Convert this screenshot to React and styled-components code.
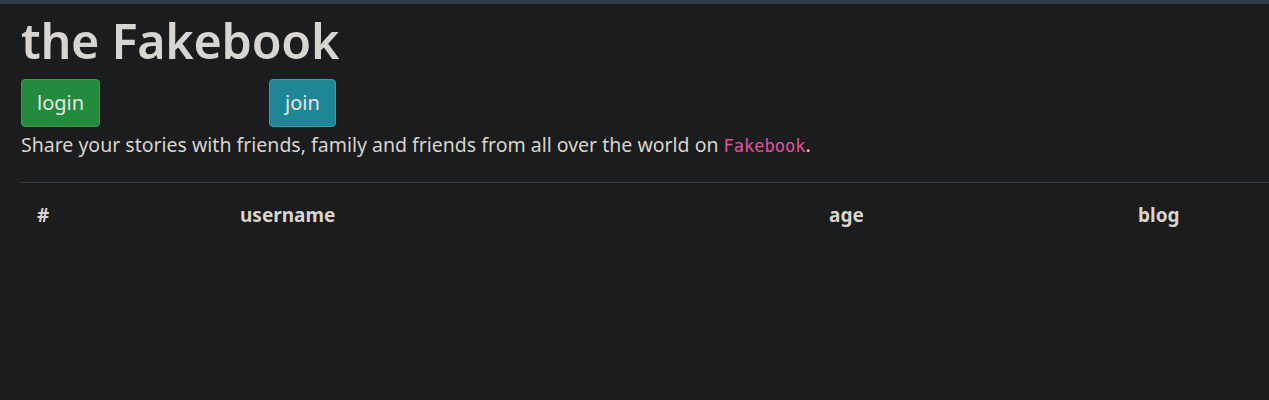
import React from "react";
import styled, { createGlobalStyle } from "styled-components";

const GlobalStyle = createGlobalStyle`
  html, body {
    margin: 0;
    padding: 0;
    background: #1b1c1e;
    color: #d8d4cf;
    font-family: "Noto Sans", "Open Sans", sans-serif;
  }
`;

const TopStrip = styled.div`
  height: 4px;
  background: #2f3d44;
`;

const Page = styled.div`
  padding: 0 0 0 21px;
  overflow: hidden;
`;

const Title = styled.h1`
  margin: 6px 0 9px;
  font-size: 48.5px;
  font-weight: 600;
  line-height: 60px;
  letter-spacing: -0.3px;
  color: #d8d4cf;
`;

const ButtonRow = styled.div`
  display: flex;
  gap: 169px;
`;

const Button = styled.button`
  height: 48px;
  padding: 0 15px;
  border: 1px solid ${(p) => p.$border};
  border-radius: 4px;
  background: ${(p) => p.$bg};
  color: #e8e6e3;
  font-family: inherit;
  font-size: 20px;
  line-height: 1;
`;

const Lead = styled.p`
  margin: 4px 0 0;
  font-size: 19.5px;
  line-height: 28px;
`;

const Code = styled.code`
  font-family: "DejaVu Sans Mono", monospace;
  font-size: 17px;
  color: #e4519a;
`;

const Rule = styled.hr`
  margin: 22px 0 0;
  border: 0;
  border-top: 1px solid #383c3f;
`;

const HeadRow = styled.div`
  display: grid;
  grid-template-columns: 203px 589px 309px 1fr;
  padding: 17px 0;
`;

const Th = styled.div`
  padding: 0 16px;
  font-size: 19px;
  font-weight: 700;
  line-height: 30px;
`;

export default function App() {
  return (
    <>
      <GlobalStyle />
      <TopStrip />
      <Page>
        <Title>the Fakebook</Title>
        <ButtonRow>
          <Button $bg="#228b3d" $border="#2aa24a">login</Button>
          <Button $bg="#1f8696" $border="#2aa0b3">join</Button>
        </ButtonRow>
        <Lead>
          Share your stories with friends, family and friends from all over the world on{" "}
          <Code>Fakebook</Code>.
        </Lead>
        <Rule />
        <HeadRow>
          <Th>#</Th>
          <Th>username</Th>
          <Th>age</Th>
          <Th>blog</Th>
        </HeadRow>
      </Page>
    </>
  );
}
